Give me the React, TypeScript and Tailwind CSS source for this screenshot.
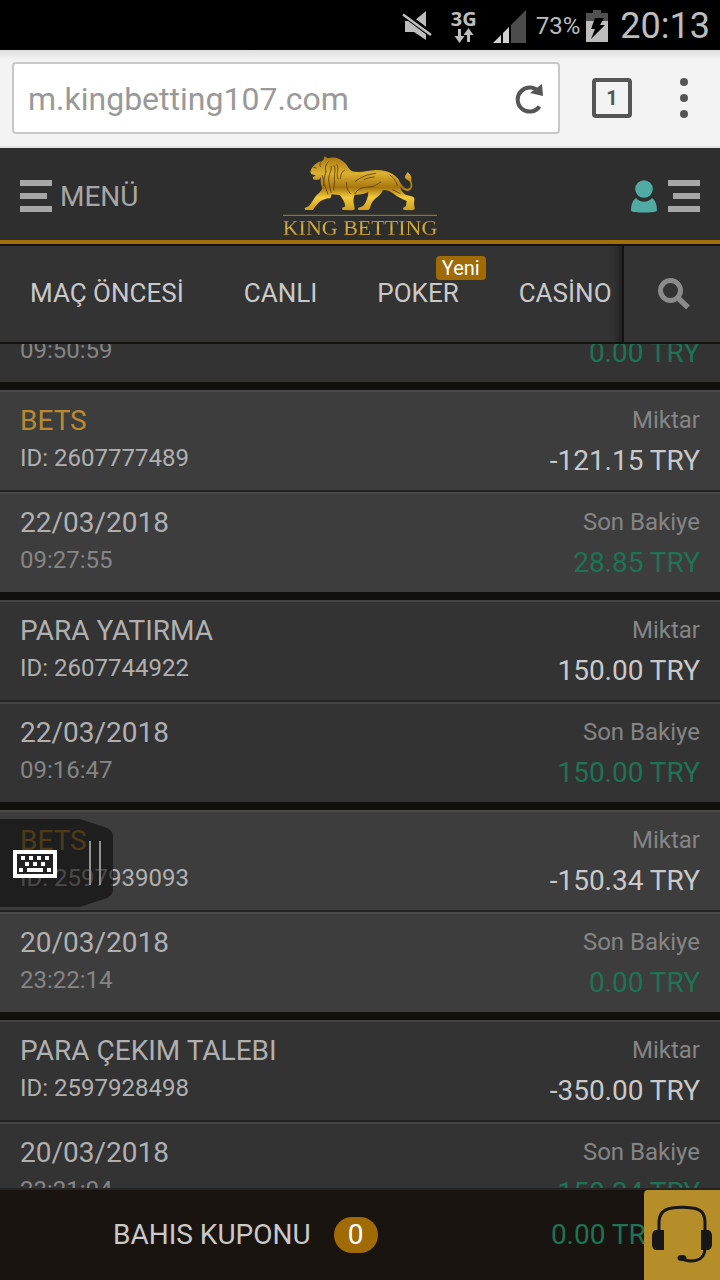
type Transaction = {
  title: string;
  id: string;
  amount: string;
  date: string;
  time: string;
  balance: string;
  bet: boolean;
};

const transactions: Transaction[] = [
  { title: "BETS", id: "2607777489", amount: "-121.15 TRY", date: "22/03/2018", time: "09:27:55", balance: "28.85 TRY", bet: true },
  { title: "PARA YATIRMA", id: "2607744922", amount: "150.00 TRY", date: "22/03/2018", time: "09:16:47", balance: "150.00 TRY", bet: false },
  { title: "BETS", id: "2597939093", amount: "-150.34 TRY", date: "20/03/2018", time: "23:22:14", balance: "0.00 TRY", bet: true },
  { title: "PARA ÇEKIM TALEBI", id: "2597928498", amount: "-350.00 TRY", date: "20/03/2018", time: "23:21:04", balance: "150.34 TRY", bet: false },
];

function StatusBar() {
  return (
    <div className="flex h-[50px] shrink-0 items-center justify-end bg-black pt-[2px] pr-[10px] text-[#bdbdbd]">
      <svg className="mr-[17px] h-[30px] w-[31px]" viewBox="0 0 31 30" aria-hidden="true">
        <path d="M3 10h9L24 0v29L12 21H3z" fill="#bdbdbd" />
        <path d="M2 3l28 21" stroke="#000" strokeWidth="6" />
        <path d="M1 3.500l28 20.500" stroke="#bdbdbd" strokeWidth="2.600" />
      </svg>
      <div className="mr-[15px] flex w-[28px] flex-col items-center">
        <span className="font-['Open_Sans',sans-serif] text-[20px] leading-[18px] font-bold">3G</span>
        <svg className="h-[15px] w-[20px]" viewBox="0 0 20 15" aria-hidden="true">
          <path d="M4 1h3v7h3.500L5.500 15 .5 8H4zM13 14h3V7h3.500L14.500 0 9.500 7H13z" fill="#bdbdbd" />
        </svg>
      </div>
      <svg className="mr-[10px] h-[33px] w-[33px]" viewBox="0 0 33 33" aria-hidden="true">
        <path d="M0 33 8 25v8zM10 23l6-6v16h-6z" fill="#d0d0d0" />
        <path d="M18 15 33 0v33H18z" fill="#4c4c4c" />
      </svg>
      <span className="mr-[6px] text-[24px] leading-8">73%</span>
      <svg className="mr-[12px] h-[32px] w-[22px]" viewBox="0 0 22 32" aria-hidden="true">
        <path d="M7 0h8v3h7v8H0V3h7z" fill="#505050" />
        <path d="M0 11h22v21H0z" fill="#bdbdbd" />
        <path d="M9 8h9l-4 7h5L5 29l4-10H5z" fill="#000" />
      </svg>
      <span className="text-[36px] leading-[40px]">20:13</span>
    </div>
  );
}

function BrowserBar() {
  return (
    <div className="flex h-[98px] shrink-0 items-center border-b-2 border-[#e4e4e4] bg-linear-to-b from-[#dedede] via-[#f3f3f3] via-10% to-[#f3f3f3] pr-4 pl-3">
      <div className="flex h-[72px] flex-1 items-center rounded-[4px] border-2 border-[#c8c8c8] bg-white pt-[2px] pr-[13px] pl-[14px]">
        <input
          type="text"
          aria-label="Adres"
          defaultValue="m.kingbetting107.com"
          className="min-w-0 flex-1 bg-transparent text-[32px] leading-[44px] text-[#999] outline-none"
        />
        <button type="button" aria-label="Yenile">
          <svg className="h-[30px] w-[32px]" viewBox="0 0 32 30" aria-hidden="true">
            <path d="M26 8A12 12 0 1 0 26.500 22.500" fill="none" stroke="#555" strokeWidth="4" />
            <path d="M29 0l1 12-13-3z" fill="#555" />
          </svg>
        </button>
      </div>
      <button
        type="button"
        aria-label="Sekmeler"
        className="ml-8 flex size-10 items-center justify-center rounded-[4px] border-4 border-[#555] text-[20px] leading-6 font-bold text-[#555]"
      >
        1
      </button>
      <button type="button" aria-label="Seçenekler" className="ml-8 flex w-10 flex-col items-center gap-2">
        <span className="size-2 rounded-full bg-[#555]" />
        <span className="size-2 rounded-full bg-[#555]" />
        <span className="size-2 rounded-full bg-[#555]" />
      </button>
    </div>
  );
}

function Logo() {
  return (
    <a href="#" className="mt-1 flex w-[154px] flex-col items-center">
      <svg className="h-[60px] w-[154px]" viewBox="42 33 462 180" aria-hidden="true">
        <defs>
          <linearGradient id="gold" x1="0" y1="0" x2="0" y2="1">
            <stop offset="0" stopColor="#a8770f" />
            <stop offset="0.320" stopColor="#dcb030" />
            <stop offset="0.580" stopColor="#a8760f" />
            <stop offset="0.760" stopColor="#f2ca3c" />
            <stop offset="1" stopColor="#cf9d20" />
          </linearGradient>
        </defs>
        <path
          d="M167 34L176 40C195 34 215 40 228 54C236 63 240 74 250 79C275 85 295 76 320 75C350 73 372 84 388 102C396 118 404 130 414 131C424 131 427 122 423 111C419 105 409 104 408 97C407 90 413 88 416 80C419 86 426 88 427 98C427 104 426 107 428 112C434 126 427 138 414 138C404 137 398 131 394 124C395 135 402 146 412 150C422 153 434 153 436 160C437 168 434 174 436 183L437 193L430 196L404 195L402 189L411 183L413 168C400 161 385 156 374 146C364 138 352 135 342 135C338 145 330 153 320 160C310 168 305 178 303 190L298 195L268 195L267 189L281 184C290 176 297 160 298 141C284 148 270 150 257 149C252 160 253 172 256 184L257 193L251 196L221 195L219 189L229 184C228 172 220 160 212 150L188 148L184 160C170 160 155 166 146 176L136 188L132 195L108 195L107 189L120 183C128 175 134 160 143 150C152 142 158 138 160 130C155 118 154 105 156 96L150 104L134 104L131 97L140 91L127 88L124 80L128 70C135 58 148 50 158 48L163 45Z"
          fill="url(#gold)"
        />
        <path
          d="M134 67l8 2M158 48c-5 5-7 11-4 17M178 50c-9 8-10 18-7 30M171 80c-5 17-10 32-2 46l8 22M187 64c0 19-11 28-7 48 2 12 3 20 6 31M195 62c8 13-2 27 2 45l-3 28M204 59c8 17-5 26 3 43M227 75c-12 7-11 17-13 26M160 92c5 10 2 22 4 30M258 110c19-15 35-21 62-25M258 146c9-18 28-19 44-20 15-2 22-7 33-15M285 104c12-6 20-7 30-8M363 90c13 10 19 21 22 32M371 134l23 12M232 112c0 14 4 26 12 34"
          fill="none"
          stroke="#5a3d0b"
          strokeWidth="2.500"
          strokeLinecap="round"
        />
        <path d="M42 211h462" stroke="#a8822c" strokeWidth="3" />
      </svg>
      <span className="bg-linear-to-b from-[#a87818] via-[#dcb53c] to-[#a87818] bg-clip-text font-['Liberation_Serif',serif] text-[22px] leading-[24px] whitespace-nowrap text-transparent">
        KING BETTING
      </span>
    </a>
  );
}

function SiteHeader() {
  return (
    <header className="shrink-0">
      <div className="grid h-[96px] grid-cols-[1fr_auto_1fr] items-center border-b-4 border-[#a46f05] bg-[#2e2e2e] px-5 pt-1">
        <button type="button" className="flex items-center gap-2 justify-self-start text-[28px] leading-8 text-[#a6a6a6]">
          <span className="flex w-8 flex-col gap-[7px]">
            <span className="h-[6px] bg-[#a6a6a6]" />
            <span className="mr-[5px] h-[6px] bg-[#a6a6a6]" />
            <span className="h-[6px] bg-[#a6a6a6]" />
          </span>
          <span className="pt-[2px]">MENÜ</span>
        </button>
        <Logo />
        <button type="button" aria-label="Hesap" className="flex items-center gap-[11px] justify-self-end">
          <svg className="h-[33px] w-[26px]" viewBox="0 0 26 33" aria-hidden="true">
            <circle cx="13" cy="9" r="8.800" fill="#50aca2" />
            <path d="M5 18c4 5 12 5 16 0 4 3 5 8 5 13-3 2-23 2-26 0 0-5 1-10 5-13z" fill="#50aca2" />
          </svg>
          <span className="flex w-8 flex-col gap-[7px]">
            <span className="h-[6px] bg-[#a6a6a6]" />
            <span className="ml-[5px] h-[6px] bg-[#a6a6a6]" />
            <span className="h-[6px] bg-[#a6a6a6]" />
          </span>
        </button>
      </div>
      <div className="flex h-[100px] border-y-2 border-[#151312] bg-[#333]">
        <nav className="flex min-w-0 flex-1 items-center overflow-hidden pb-[2px] text-[26px] leading-8 whitespace-nowrap text-[#c9c9c9] shadow-[inset_-10px_0_8px_-8px_#181818]">
          <a href="#" className="px-[30px]">MAÇ ÖNCESİ</a>
          <a href="#" className="px-[30px]">CANLI</a>
          <a href="#" className="relative px-[30px]">
            POKER
            <span className="absolute -top-[21px] right-[3px] flex h-6 items-center rounded-[4px] bg-[#a06b04] px-[6px] text-[20px] leading-6 text-white">
              Yeni
            </span>
          </a>
          <a href="#" className="px-[30px]">CASİNO</a>
        </nav>
        <button type="button" aria-label="Ara" className="flex w-[98px] items-center justify-center border-l-2 border-[#151312] pl-1">
          <svg className="size-8" viewBox="0 0 32 32" aria-hidden="true">
            <circle cx="12.500" cy="12.500" r="10" fill="none" stroke="#8b8b8b" strokeWidth="5" />
            <path d="M19.500 19.500l10.500 10" stroke="#8b8b8b" strokeWidth="5.500" />
          </svg>
        </button>
      </div>
    </header>
  );
}

function BalanceRow({ date, time, balance, bet }: { date: string; time: string; balance: string; bet: boolean }) {
  return (
    <div
      className={
        bet
          ? "flex h-[100px] justify-between border-t-2 border-[#4a4a4a] bg-[#3d3d3d] px-5 pt-[10px]"
          : "flex h-[100px] justify-between border-t-2 border-[#434343] bg-[#333] px-5 pt-[10px]"
      }
    >
      <div>
        <div className="text-[28px] leading-[38px] text-[#b0b0b0]">{date}</div>
        <div className="text-[24px] leading-[36px] text-[#858585]">{time}</div>
      </div>
      <div className="text-right">
        <div className="text-[24px] leading-[36px] text-[#858585]">Son Bakiye</div>
        <div className="text-[28px] leading-[46px] text-[#1d7354]">{balance}</div>
      </div>
    </div>
  );
}

function TransactionCard({ item }: { item: Transaction }) {
  return (
    <li className="shrink-0">
      <div
        className={
          item.bet
            ? "flex h-[100px] justify-between border-t-2 border-[#4a4a4a] bg-[#3d3d3d] px-5 pt-[10px]"
            : "flex h-[100px] justify-between border-t-2 border-[#434343] bg-[#333] px-5 pt-[10px]"
        }
      >
        <div>
          <div className={item.bet ? "text-[28px] leading-[38px] text-[#b98a30]" : "text-[28px] leading-[38px] text-[#b0b0b0]"}>
            {item.title}
          </div>
          <div className="text-[24px] leading-[36px] text-[#b0b0b0]">ID: {item.id}</div>
        </div>
        <div className="text-right">
          <div className="text-[24px] leading-[36px] text-[#858585]">Miktar</div>
          <div className="text-[28px] leading-[46px] text-[#c9c9c9]">{item.amount}</div>
        </div>
      </div>
      <div className="h-[2px] bg-[#232323]" />
      <BalanceRow date={item.date} time={item.time} balance={item.balance} bet={item.bet} />
    </li>
  );
}

function KeyboardHandle() {
  return (
    <button type="button" aria-label="Klavye" className="absolute top-[475px] left-0">
      <svg className="h-[88px] w-[114px]" viewBox="0 0 114 88" aria-hidden="true">
        <path d="M0 0h80l27 9q6 3 6 9v52q0 6-6 9l-27 9H0z" fill="#0c0c0c" fillOpacity="0.620" />
        <path d="M13 31h44v28H13z" fill="#fff" />
        <path d="M17 35h36v20H17z" fill="#222" />
        <path
          d="M21 37h4v4h-4zM29 37h4v4h-4zM37 37h4v4h-4zM45 37h4v4h-4zM25 43h4v4h-4zM33 43h4v4h-4zM41 43h4v4h-4zM19 49h4v4h-4zM27 49h16v4H27zM47 49h4v4h-4z"
          fill="#fff"
        />
        <path d="M89 22h2v44h-2zM99 22h2v44h-2z" fill="#929292" />
      </svg>
    </button>
  );
}

function CouponBar() {
  return (
    <footer className="relative flex h-[92px] shrink-0 items-center border-t-2 border-[#262422] bg-[#1a1411] pr-10 pl-[113px] text-[28px] leading-9">
      <span className="text-[#c9c9c9]">BAHIS KUPONU</span>
      <span className="ml-[23px] flex h-9 w-11 items-center justify-center rounded-full bg-[#a06b04] text-white">0</span>
      <span className="ml-auto pr-[18px] text-[#1d7354]">0.00 TRY</span>
      <button type="button" aria-label="Canlı destek" className="absolute top-0 right-0 h-[90px] w-[76px] rounded-tl-[4px] bg-[#b58e2a]">
        <svg className="h-[90px] w-[76px]" viewBox="0 0 76 90" aria-hidden="true">
          <path
            d="M15 43V33c0-10 5-14 13-15 7-1 13-1 20 0 9 1 13 5 13 15v10M61 58c0 9-6 13-14 13-4 0-7-1-10-3"
            fill="none"
            stroke="#171717"
            strokeWidth="3"
          />
          <path d="M11 40h9v20h-9q-3-2-3-5V45q0-3 3-5zM57 40h8q3 2 3 5v10q0 3-3 5h-8z" fill="#171717" />
          <ellipse cx="38" cy="68" rx="4.500" ry="3" fill="#171717" />
        </svg>
      </button>
    </footer>
  );
}

export default function App() {
  return (
    <div className="flex h-screen flex-col overflow-hidden bg-[#11100e] font-[Roboto,sans-serif]">
      <StatusBar />
      <BrowserBar />
      <SiteHeader />
      <main className="relative min-h-0 flex-1 overflow-hidden">
        <ul className="-mt-[62px] flex flex-col gap-2">
          <li className="shrink-0">
            <BalanceRow date="22/03/2018" time="09:50:59" balance="0.00 TRY" bet={false} />
          </li>
          {transactions.map((item) => (
            <TransactionCard key={item.id} item={item} />
          ))}
        </ul>
        <KeyboardHandle />
      </main>
      <CouponBar />
    </div>
  );
}
